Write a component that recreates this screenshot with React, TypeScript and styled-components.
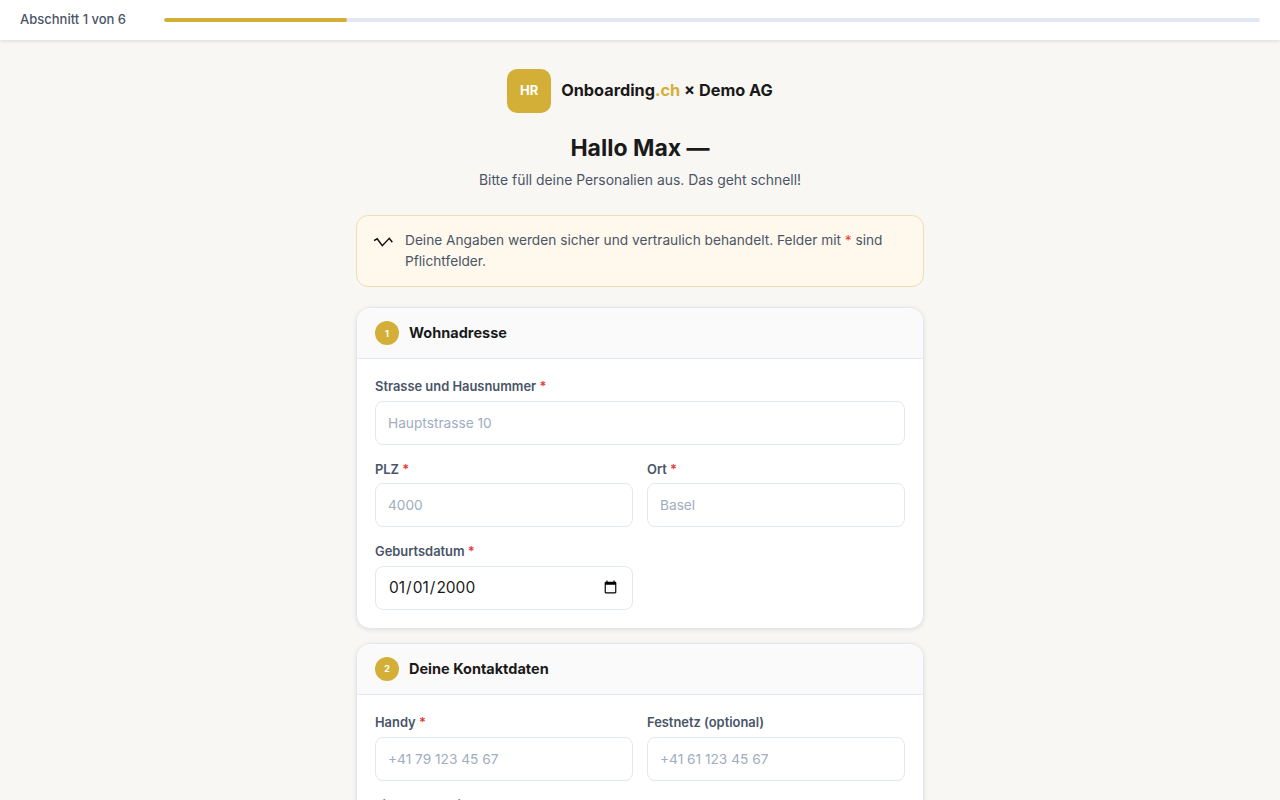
import React from "react";
import styled, { createGlobalStyle } from "styled-components";

const GlobalStyle = createGlobalStyle`
  * {
    box-sizing: border-box;
  }

  html,
  body {
    margin: 0;
    height: 800px;
    overflow: hidden;
  }

  body {
    background: #f9f7f3;
    font-family: "Inter", "Liberation Sans", sans-serif;
    color: #1a1a1a;
  }
`;

const TopBar = styled.header`
  height: 40px;
  background: #fff;
  box-shadow: 0 1px 4px rgba(0, 0, 0, 0.12);
  display: flex;
  align-items: center;
  gap: 37px;
  padding: 0 20px;
`;

const StepLabel = styled.span`
  font-size: 13px;
  line-height: 18px;
  font-weight: 500;
  color: #4a5568;
  white-space: nowrap;
  width: 107px;
  margin-bottom: 2px;
`;

const ProgressTrack = styled.div`
  flex: 1;
  height: 4px;
  border-radius: 2px;
  background: #e2e7f1;
  overflow: hidden;
`;

const ProgressFill = styled.div`
  height: 100%;
  border-radius: 2px;
  background: #d4af37;
`;

const Main = styled.main`
  width: 568px;
  margin: 0 auto;
  padding-top: 29px;
`;

const Brand = styled.div`
  display: flex;
  align-items: center;
  justify-content: center;
  gap: 10px;
  margin-bottom: 20px;
`;

const LogoMark = styled.div`
  width: 44px;
  height: 44px;
  border-radius: 10px;
  background: #d4af37;
  color: #fff;
  display: flex;
  align-items: center;
  justify-content: center;
  font-size: 13px;
  font-weight: 700;
  padding-bottom: 2px;
`;

const BrandName = styled.span`
  font-size: 16.3px;
  line-height: 20px;
  font-weight: 700;
  color: #1a1a1a;
  margin-bottom: 2px;
`;

const BrandAccent = styled.span`
  color: #d4af37;
`;

const Title = styled.h1`
  margin: 0 0 7px;
  font-size: 23px;
  line-height: 30px;
  font-weight: 700;
  text-align: center;
`;

const Subtitle = styled.p`
  margin: 0 0 25px;
  font-size: 13.9px;
  line-height: 20px;
  color: #4a5568;
  text-align: center;
`;

const Notice = styled.div`
  display: flex;
  align-items: flex-start;
  gap: 11px;
  padding: 14px 17px;
  margin-bottom: 20px;
  background: #fff8ec;
  border: 1px solid #f0dcb0;
  border-radius: 12px;
  font-size: 13.7px;
  line-height: 21px;
  color: #4a5568;
`;

const NoticeIcon = styled.svg`
  flex: none;
  width: 20px;
  height: 20px;
  margin-top: 2px;
`;

const Star = styled.span`
  color: #e53e3e;
`;

const Card = styled.section`
  background: #fff;
  border: 1px solid #e2e8f0;
  border-radius: 14px;
  box-shadow: 0 1px 4px rgba(0, 0, 0, 0.1);
  margin-bottom: 14px;
  overflow: hidden;
`;

const CardHeader = styled.div`
  height: 51px;
  display: flex;
  align-items: center;
  gap: 10px;
  padding: 0 18px;
  background: #fafafa;
  border-bottom: 1px solid #e2e8f0;
`;

const StepBadge = styled.span`
  width: 24px;
  height: 24px;
  border-radius: 50%;
  background: #d4af37;
  color: #fff;
  font-size: 9px;
  font-weight: 700;
  display: flex;
  align-items: center;
  justify-content: center;
`;

const CardTitle = styled.h2`
  margin: 0;
  font-size: 14.5px;
  font-weight: 700;
  color: #1a1a1a;
  margin-bottom: 1px;
`;

const CardBody = styled.div`
  display: grid;
  grid-template-columns: 1fr 1fr;
  column-gap: 14px;
  row-gap: 15.8px;
  padding: 19.2px 18px 18px;
`;

const Field = styled.label<{ $wide?: boolean }>`
  display: flex;
  flex-direction: column;
  gap: 4.2px;
  grid-column: ${({ $wide }) => ($wide ? "1 / -1" : "auto")};
`;

const FieldLabel = styled.span`
  font-size: 12.9px;
  line-height: 18.5px;
  font-weight: 600;
  color: #4a5568;
`;

const Input = styled.input`
  height: 44px;
  width: 100%;
  padding: 0 12px;
  border: 1px solid #e2e8f0;
  border-radius: 8px;
  background: #fff;
  font-family: inherit;
  font-size: 13.7px;
  color: #1a1a1a;
  outline: none;

  &::placeholder {
    color: #a0aec0;
  }
`;

const DateInput = styled(Input)`
  font-size: 15.5px;
`;

function Required() {
  return <Star>*</Star>;
}

export default function App() {
  return (
    <>
      <GlobalStyle />
      <TopBar>
        <StepLabel>Abschnitt 1 von 6</StepLabel>
        <ProgressTrack>
          <ProgressFill style={{ width: `${(1 / 6) * 100}%` }} />
        </ProgressTrack>
      </TopBar>
      <Main>
        <Brand>
          <LogoMark>HR</LogoMark>
          <BrandName>
            Onboarding<BrandAccent>.ch</BrandAccent> × Demo AG
          </BrandName>
        </Brand>
        <Title>Hallo Max —</Title>
        <Subtitle>Bitte füll deine Personalien aus. Das geht schnell!</Subtitle>
        <Notice>
          <NoticeIcon viewBox="0 0 20 20" fill="none" stroke="#111" strokeWidth="1.5">
            <path d="M0 8.7 L3.2 6.8 L8.3 13.7 L15.3 6.3 L18.3 10.3" />
          </NoticeIcon>
          <span>
            Deine Angaben werden sicher und vertraulich behandelt. Felder mit <Star>*</Star> sind
            Pflichtfelder.
          </span>
        </Notice>
        <Card>
          <CardHeader>
            <StepBadge>1</StepBadge>
            <CardTitle>Wohnadresse</CardTitle>
          </CardHeader>
          <CardBody>
            <Field $wide>
              <FieldLabel>
                Strasse und Hausnummer <Required />
              </FieldLabel>
              <Input placeholder="Hauptstrasse 10" />
            </Field>
            <Field>
              <FieldLabel>
                PLZ <Required />
              </FieldLabel>
              <Input placeholder="4000" />
            </Field>
            <Field>
              <FieldLabel>
                Ort <Required />
              </FieldLabel>
              <Input placeholder="Basel" />
            </Field>
            <Field>
              <FieldLabel>
                Geburtsdatum <Required />
              </FieldLabel>
              <DateInput type="date" defaultValue="2000-01-01" />
            </Field>
          </CardBody>
        </Card>
        <Card>
          <CardHeader>
            <StepBadge>2</StepBadge>
            <CardTitle>Deine Kontaktdaten</CardTitle>
          </CardHeader>
          <CardBody>
            <Field>
              <FieldLabel>
                Handy <Required />
              </FieldLabel>
              <Input placeholder="+41 79 123 45 67" />
            </Field>
            <Field>
              <FieldLabel>Festnetz (optional)</FieldLabel>
              <Input placeholder="+41 61 123 45 67" />
            </Field>
            <Field $wide>
              <FieldLabel>
                Firmen-E-Mail <Required />
              </FieldLabel>
              <Input placeholder="max@demo.ch" />
            </Field>
          </CardBody>
        </Card>
      </Main>
    </>
  );
}
